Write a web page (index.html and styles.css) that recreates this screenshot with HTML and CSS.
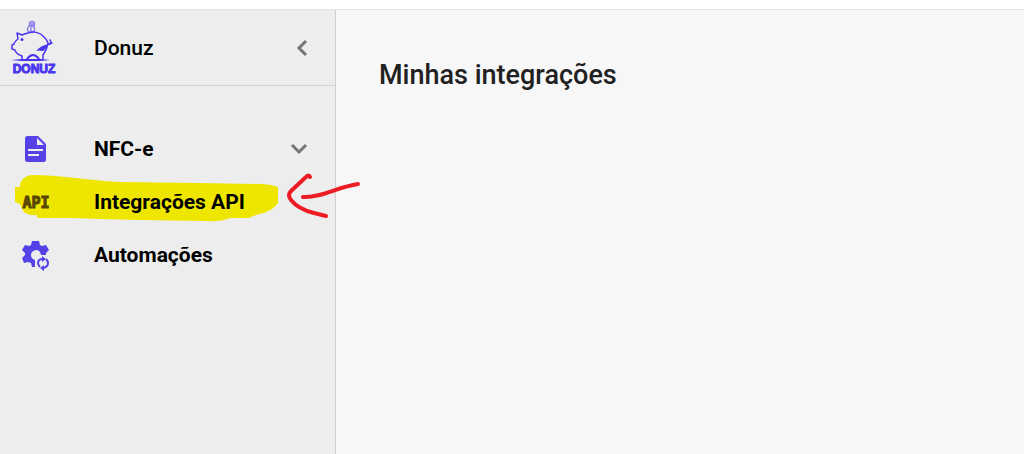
FILE: index.html
```html
<!DOCTYPE html>
<html lang="pt-BR">
<head>
    <meta charset="UTF-8">
    <meta name="viewport" content="width=device-width, initial-scale=1.0">
    <title>Minhas integrações</title>
    <link rel="stylesheet" href="styles.css">
</head>
<body>
    <div class="topbar"></div>
    <div class="layout">
        <aside class="sidebar">
            <div class="brand">
                <svg class="logo" viewBox="0 0 48 56" aria-hidden="true">
                    <g fill="none" stroke="#4a36ee" stroke-linecap="round" stroke-linejoin="round">
                        <g stroke-width="1.500" opacity=".6">
                            <circle cx="22" cy="4" r="2.500"/>
                            <circle cx="21" cy="9" r="3.500"/>
                            <path d="M21 8v3M21 4h3"/>
                        </g>
                        <path stroke-width="1.500" d="M18 13C23 11 30 12 34 17C36 19 38 21 38 24Q43 25 40 20M38 24L42 23M18 13Q14 14 12 15L7 13L8 19Q5 21 4 24L2 25V29L5 30Q6 34 12 36V39M38 24C37 29 35 32 33 35V39"/>
                        <path stroke-width="2" d="M17 39Q23 31 29 39"/>
                    </g>
                    <g fill="#4a36ee">
                        <circle cx="12" cy="19.500" r="1.500"/>
                        <path d="M26 31Q30 26 38 24Q35 32 31 31Q29 30 26 31ZM1 40L12 39H31L40 40L31 41H11Z"/>
                        <text class="logo-text" x="24" y="53" text-anchor="middle">DONUZ</text>
                    </g>
                </svg>
                <span class="brand-name">Donuz</span>
                <button class="collapse" aria-label="Recolher menu">
                    <svg viewBox="0 0 24 24"><path d="M15 5l-7 7 7 7"/></svg>
                </button>
            </div>
            <nav class="menu">
                <a class="item" href="#">
                    <svg class="icon" viewBox="0 0 28 28" aria-hidden="true">
                        <path fill="#5541e8" fill-rule="evenodd" d="M5 1H16L24 9V24.500Q24 27 21.500 27H5.500Q3 27 3 24.500V3.500Q3 1 5.500 1ZM15 3V10H22ZM6 14V16H21V14ZM6 19V21H17V19Z"/>
                    </svg>
                    <span class="label">NFC-e</span>
                    <svg class="chevron" viewBox="0 0 24 24" aria-hidden="true"><path d="M5 8l7 7 7-7"/></svg>
                </a>
                <a class="item marked" href="#">
                    <svg class="marker" viewBox="0 0 384 53" aria-hidden="true">
                        <path fill="#efe600" d="M15 12H20Q20 2 31 0C60 0 85 5 120 7L200 8L262 9Q270 9 278 12V28Q274 34 264 38Q257 39 249 43H230Q220 47 205 46L140 45L100 44L70 43H37V40Q25 41 22 34L20 29L15 27Z"/>
                    </svg>
                    <svg class="icon" viewBox="0 0 28 28" aria-hidden="true">
                        <text class="api-text" x="14" y="20" text-anchor="middle">API</text>
                    </svg>
                    <span class="label">Integrações API</span>
                    <svg class="arrow" viewBox="0 0 384 53" aria-hidden="true">
                        <path d="M310 2Q309 -1 306 2L291 16Q287 20 291 25Q298 34 314 38L326 41M303 22C321 23 337 12 358 9"/>
                    </svg>
                </a>
                <a class="item" href="#">
                    <svg class="icon" viewBox="0 0 28 28" aria-hidden="true">
                        <path fill="#5541e8" fill-rule="evenodd" d="M10 0H17L18 4L20 5L24 4L27 9L24 12V14H19Q18 9 14 9Q9 10 9 14Q9 18 13 19V26H10L9 22L6 21L2 22L0 17L3 14V12L0 9L3 4L7 5L9 4Z"/>
                        <g fill="none" stroke="#5541e8" stroke-width="2">
                            <path d="M21 18Q16 18 16 22Q16 24 18 26M21 27Q26 26 26 22Q26 20 24 18"/>
                        </g>
                        <path fill="#5541e8" d="M20 15L24 18L20 21ZM22 24V30L18 27Z"/>
                    </svg>
                    <span class="label">Automações</span>
                </a>
            </nav>
        </aside>
        <main class="content">
            <h1>Minhas integrações</h1>
        </main>
    </div>
</body>
</html>
```
FILE: styles.css
```css
* {
    box-sizing: border-box;
}
body {
    margin: 0;
    min-height: 100vh;
    display: flex;
    flex-direction: column;
    font-family: Roboto, "Liberation Sans", sans-serif;
    background: #f7f7f7;
    color: #000;
}
.topbar {
    height: 10px;
    background: #fff;
    border-bottom: 1px solid #e4e4e4;
}
.layout {
    flex: 1;
    display: flex;
}
.sidebar {
    flex: 0 0 336px;
    background: #ededed;
    border-right: 1px solid #d0d0d0;
}
.brand {
    display: flex;
    align-items: center;
    height: 76px;
    padding: 0 20px 0 10px;
    border-bottom: 1px solid #d3d3d3;
}
.logo {
    width: 48px;
    height: 56px;
    overflow: visible;
}
.logo-text {
    font-family: "Liberation Sans", sans-serif;
    font-size: 12px;
    font-weight: bold;
    stroke: #4a36ee;
    stroke-width: 1px;
}
.brand-name {
    flex: 1;
    margin-left: 36px;
    font-size: 21px;
    line-height: 24px;
    font-weight: 500;
}
.collapse {
    width: 24px;
    height: 24px;
    padding: 0;
    border: none;
    background: none;
    cursor: pointer;
}
.collapse svg,
.chevron {
    display: block;
    width: 24px;
    height: 24px;
    fill: none;
    stroke: #757575;
    stroke-width: 3;
}
.menu {
    padding-top: 36px;
}
.item {
    position: relative;
    display: flex;
    align-items: center;
    height: 53px;
    padding: 0 24px 0 22px;
    color: #000;
    text-decoration: none;
}
.icon {
    position: relative;
    width: 28px;
    height: 28px;
    overflow: visible;
}
.api-text {
    font-family: "DejaVu Sans Mono", monospace;
    font-size: 15px;
    font-weight: bold;
    fill: #574600;
    stroke: #574600;
    stroke-width: 1px;
}
.label {
    position: relative;
    flex: 1;
    margin-left: 44px;
    font-size: 21px;
    line-height: 24px;
    font-weight: 700;
}
.marker,
.arrow {
    position: absolute;
    top: 0;
    left: 0;
    width: 384px;
    height: 53px;
    overflow: visible;
    pointer-events: none;
}
.arrow {
    fill: none;
    stroke: #ed1c24;
    stroke-width: 4;
    stroke-linecap: round;
    stroke-linejoin: round;
}
.content {
    flex: 1;
    padding: 49px 43px;
}
h1 {
    margin: 0;
    font-size: 27px;
    line-height: 32px;
    font-weight: 500;
    color: #212121;
}
```
